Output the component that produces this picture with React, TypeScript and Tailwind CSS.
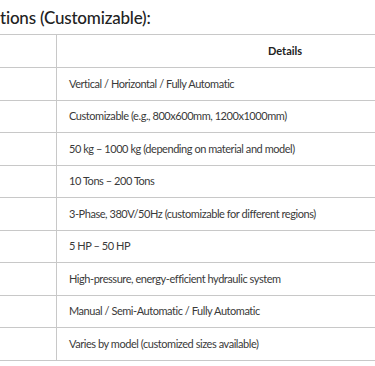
import React from "react";

const rows = [
  { label: "Machine Type", detail: "Vertical / Horizontal / Fully Automatic" },
  { label: "Bale Size", detail: "Customizable (e.g., 800x600mm, 1200x1000mm)" },
  { label: "Bale Weight", detail: "50 kg – 1000 kg (depending on material and model)" },
  { label: "Compression Force", detail: "10 Tons – 200 Tons" },
  { label: "Power Supply", detail: "3-Phase, 380V/50Hz (customizable for different regions)" },
  { label: "Motor Power", detail: "5 HP – 50 HP" },
  { label: "Hydraulic System", detail: "High-pressure, energy-efficient hydraulic system" },
  { label: "Control System", detail: "Manual / Semi-Automatic / Fully Automatic" },
  { label: "Dimensions", detail: "Varies by model (customized sizes available)" },
];

export default function App() {
  return (
    <div className="w-[375px] h-[366px] overflow-hidden bg-white text-[#3a3a3a]" style={{ fontFamily: "Lato, 'Open Sans', sans-serif" }}>
      <h3 className="relative pt-[6px] text-[17px] leading-[24px] font-medium tracking-[-0.2px] text-[#222] whitespace-nowrap">
        <span className="absolute right-full">Specifica</span>tions (Customizable):
      </h3>
      <div className="ml-[-110px] w-[700px]">
        <table className="mt-[4px] w-[624px] border-collapse text-[11px] tracking-[-0.45px]">
          <thead>
            <tr className="h-[33px]">
              <th className="w-[166px] border border-[#c8c8c8] font-bold text-white">Specification</th>
              <th className="border border-[#c8c8c8] font-bold text-[#222] tracking-normal">Details</th>
            </tr>
          </thead>
          <tbody>
            {rows.map((row, idx) => (
              <tr key={idx} className="h-[32.5px]">
                <td className="border border-[#c8c8c8] px-3 text-white">{row.label}</td>
                <td className="border border-[#c8c8c8] px-3 whitespace-nowrap">{row.detail}</td>
              </tr>
            ))}
          </tbody>
        </table>
      </div>
    </div>
  );
}
